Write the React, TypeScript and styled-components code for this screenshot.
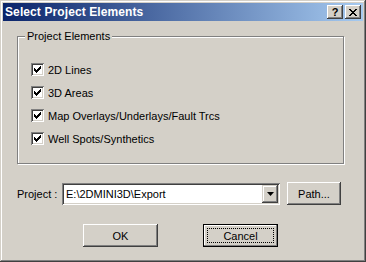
import React from "react";
import styled, { createGlobalStyle } from "styled-components";

const GlobalStyle = createGlobalStyle`
  html, body {
    margin: 0;
    padding: 0;
    background: #d4d0c8;
  }
  * {
    box-sizing: border-box;
  }
`;

const Window = styled.div`
  width: 366px;
  height: 262px;
  padding: 3px;
  background: #d4d0c8;
  font-family: Tahoma, "Liberation Sans", Arial, sans-serif;
  font-size: 11px;
  color: #000;
  box-shadow: inset -1px -1px #404040, inset 1px 1px #d4d0c8,
    inset -2px -2px #808080, inset 2px 2px #ffffff;
  display: flex;
  flex-direction: column;
`;

const TitleBar = styled.div`
  height: 18px;
  display: flex;
  align-items: center;
  padding: 0 2px 0 2px;
  background: linear-gradient(to right, #0a246a, #a6caf0);
`;

const Title = styled.div`
  flex: 1;
  color: #fff;
  font-weight: bold;
  font-size: 12px;
  letter-spacing: 0.1px;
`;

const CaptionButton = styled.div<{ $gap?: boolean }>`
  width: 16px;
  height: 14px;
  margin-left: ${(p) => (p.$gap ? "2px" : "0")};
  background: #d4d0c8;
  box-shadow: inset -1px -1px #404040, inset 1px 1px #ffffff,
    inset -2px -2px #808080;
  display: flex;
  align-items: center;
  justify-content: center;
  font-weight: bold;
  font-size: 11px;
  line-height: 14px;
  color: #000;
`;

const Body = styled.div`
  padding: 15px 0 0 14px;
  display: flex;
  flex-direction: column;
`;

const Group = styled.div`
  position: relative;
  width: 327px;
  height: 128px;
  border: 1px solid #808080;
  box-shadow: inset 1px 1px #ffffff, 1px 1px #ffffff;
  padding: 26px 0 0 13px;
  display: flex;
  flex-direction: column;
  gap: 10px;
`;

const GroupCaption = styled.span`
  position: absolute;
  top: -8px;
  left: 7px;
  padding: 0 2px;
  background: #d4d0c8;
  line-height: 14px;
`;

const CheckRow = styled.label`
  display: flex;
  align-items: center;
  height: 13px;
  gap: 4px;
`;

const Box = styled.span`
  width: 13px;
  height: 13px;
  background: #fff;
  box-shadow: inset 1px 1px #808080, inset -1px -1px #ffffff,
    inset 2px 2px #404040, inset -2px -2px #d4d0c8;
  display: block;
`;

const ProjectRow = styled.div`
  display: flex;
  align-items: center;
  margin-top: 18px;
  height: 23px;
`;

const Label = styled.span`
  width: 45px;
`;

const Combo = styled.div`
  width: 218px;
  height: 22px;
  background: #fff;
  box-shadow: inset 1px 1px #808080, inset -1px -1px #ffffff,
    inset 2px 2px #404040, inset -2px -2px #d4d0c8;
  padding: 2px;
  display: flex;
  align-items: center;
`;

const ComboText = styled.span`
  flex: 1;
  padding-left: 2px;
`;

const DropButton = styled.div`
  width: 16px;
  height: 18px;
  background: #d4d0c8;
  box-shadow: inset -1px -1px #404040, inset 1px 1px #d4d0c8,
    inset -2px -2px #808080, inset 2px 2px #ffffff;
  display: flex;
  align-items: center;
  justify-content: center;
`;

const Button = styled.div<{ $w: number; $default?: boolean }>`
  width: ${(p) => p.$w}px;
  height: 23px;
  background: #d4d0c8;
  display: flex;
  align-items: center;
  justify-content: center;
  box-shadow: ${(p) =>
    p.$default
      ? "inset 0 0 0 1px #000, inset -2px -2px #808080, inset 2px 2px #ffffff"
      : "inset -1px -1px #404040, inset 1px 1px #ffffff, inset -2px -2px #808080"};
  position: relative;
`;

const Focus = styled.span`
  position: absolute;
  inset: 4px;
  border: 1px dotted #000;
`;

const PathButton = styled(Button)`
  margin-left: 7px;
`;

const ButtonRow = styled.div`
  display: flex;
  gap: 45px;
  margin-top: 19px;
  padding-left: 66px;
`;

const Check = () => (
  <svg width="13" height="13" viewBox="0 0 13 13" style={{ display: "block" }}>
    <path
      d="M3 5h1v3h-1zM4 6h1v3h-1zM5 7h1v3h-1zM6 6h1v3h-1zM7 5h1v3h-1zM8 4h1v3h-1zM9 3h1v3h-1z"
      fill="#000"
    />
  </svg>
);

const items = [
  "2D Lines",
  "3D Areas",
  "Map Overlays/Underlays/Fault Trcs",
  "Well Spots/Synthetics",
];

export default function App() {
  return (
    <>
      <GlobalStyle />
      <Window>
        <TitleBar>
          <Title>Select Project Elements</Title>
          <CaptionButton>?</CaptionButton>
          <CaptionButton $gap>
            <svg width="8" height="7" viewBox="0 0 8 7">
              <path
                d="M0 0h2v1h-2zM6 0h2v1h-2zM1 1h2v1h-2zM5 1h2v1h-2zM2 2h4v1h-4zM3 3h2v1h-2zM2 4h4v1h-4zM1 5h2v1h-2zM5 5h2v1h-2zM0 6h2v1h-2zM6 6h2v1h-2z"
                fill="#000"
              />
            </svg>
          </CaptionButton>
        </TitleBar>
        <Body>
          <Group>
            <GroupCaption>Project Elements</GroupCaption>
            {items.map((t) => (
              <CheckRow key={t}>
                <Box>
                  <Check />
                </Box>
                {t}
              </CheckRow>
            ))}
          </Group>
          <ProjectRow>
            <Label>Project :</Label>
            <Combo>
              <ComboText>E:\2DMINI3D\Export</ComboText>
              <DropButton>
                <svg width="7" height="4" viewBox="0 0 7 4">
                  <path d="M0 0h7L3.5 4z" fill="#000" />
                </svg>
              </DropButton>
            </Combo>
            <PathButton $w={54}>Path...</PathButton>
          </ProjectRow>
          <ButtonRow>
            <Button $w={75}>OK</Button>
            <Button $w={75} $default>
              <Focus />
              Cancel
            </Button>
          </ButtonRow>
        </Body>
      </Window>
    </>
  );
}
